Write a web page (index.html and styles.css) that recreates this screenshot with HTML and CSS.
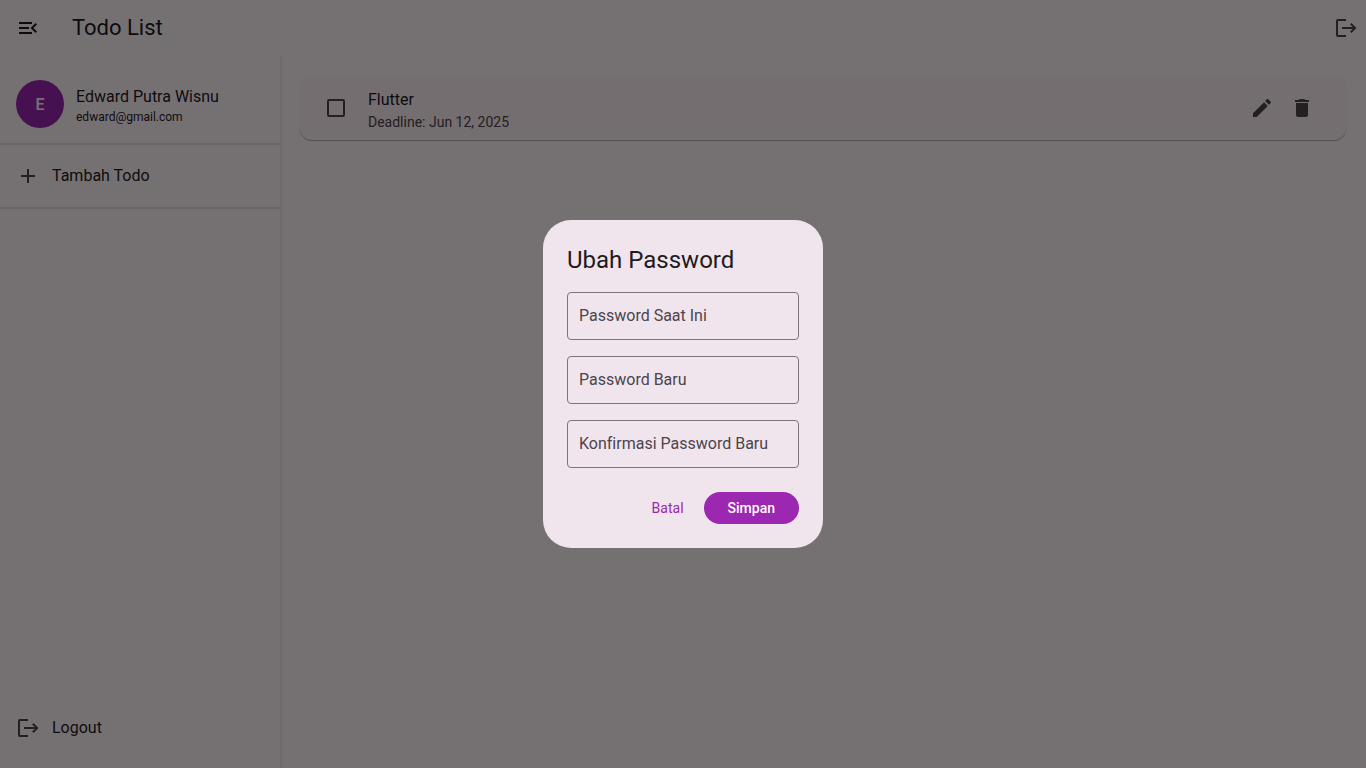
FILE: index.html
```html
<!DOCTYPE html>
<html lang="id">
<head>
<meta charset="utf-8">
<meta name="viewport" content="width=device-width, initial-scale=1">
<title>Todo List</title>
<link rel="stylesheet" href="styles.css">
</head>
<body>
<div class="app">
  <header class="app-bar">
    <button class="icon-button menu-button" type="button" aria-label="Tutup menu">
      <svg class="icon" viewBox="0 0 24 24"><path d="M3 18h13v-2H3v2zM3 13h10v-2H3v2zm0-7v2h13V6H3zm18 9.590L17.420 12 21 8.410 19.590 7l-5 5 5 5L21 15.590z"/></svg>
    </button>
    <h1 class="app-title">Todo List</h1>
    <button class="icon-button" type="button" aria-label="Keluar">
      <svg class="icon" viewBox="0 0 24 24"><path d="M4 3h8v2H4v14h8v2H4c-1.100 0-2-.9-2-2V5c0-1.100.9-2 2-2zM17.500 7l5 5-5 5-1.410-1.410L18.670 13H8v-2h10.670l-2.580-2.590z"/></svg>
    </button>
  </header>
  <div class="body">
    <aside class="sidebar">
      <section class="profile">
        <div class="avatar">E</div>
        <div class="profile-text">
          <p class="profile-name">Edward Putra Wisnu</p>
          <p class="profile-email">edward@gmail.com</p>
        </div>
      </section>
      <button class="nav-item nav-item-divided" type="button">
        <svg class="icon" viewBox="0 0 24 24"><path d="M19 13h-6v6h-2v-6H5v-2h6V5h2v6h6v2z"/></svg>
        Tambah Todo
      </button>
      <button class="nav-item nav-item-last" type="button">
        <svg class="icon" viewBox="0 0 24 24"><path d="M4 3h8v2H4v14h8v2H4c-1.100 0-2-.9-2-2V5c0-1.100.9-2 2-2zM17.500 7l5 5-5 5-1.410-1.410L18.670 13H8v-2h10.670l-2.580-2.590z"/></svg>
        Logout
      </button>
    </aside>
    <main class="content">
      <article class="todo">
        <input class="todo-check" type="checkbox" id="todo-1">
        <div class="todo-text">
          <label class="todo-title" for="todo-1">Flutter</label>
          <p class="todo-deadline">Deadline: Jun 12, 2025</p>
        </div>
        <button class="icon-button" type="button" aria-label="Ubah todo">
          <svg class="icon" viewBox="0 0 24 24"><path d="M3 17.250V21h3.750L17.810 9.940l-3.750-3.750L3 17.250zM20.710 7.040c.39-.39.39-1.020 0-1.410l-2.340-2.340c-.39-.39-1.020-.39-1.410 0l-1.830 1.830 3.750 3.750 1.830-1.830z"/></svg>
        </button>
        <button class="icon-button" type="button" aria-label="Hapus todo">
          <svg class="icon" viewBox="0 0 24 24"><path d="M6 19c0 1.100.9 2 2 2h8c1.100 0 2-.9 2-2V7H6v12zM19 4h-3.500l-1-1h-5l-1 1H5v2h14V4z"/></svg>
        </button>
      </article>
    </main>
  </div>
</div>
<div class="scrim">
  <form class="dialog" role="dialog" aria-modal="true" aria-labelledby="dialog-title">
    <h2 class="dialog-title" id="dialog-title">Ubah Password</h2>
    <div class="fields">
      <div class="field">
        <input class="field-input" type="password" id="current">
        <label class="field-label" for="current">Password Saat Ini</label>
      </div>
      <div class="field">
        <input class="field-input" type="password" id="new">
        <label class="field-label" for="new">Password Baru</label>
      </div>
      <div class="field">
        <input class="field-input" type="password" id="confirm">
        <label class="field-label" for="confirm">Konfirmasi Password Baru</label>
      </div>
    </div>
    <div class="actions">
      <button class="button" type="button">Batal</button>
      <button class="button button-filled" type="submit">Simpan</button>
    </div>
  </form>
</div>
</body>
</html>
```
FILE: styles.css
```css
* { box-sizing: border-box; }
body, h1, h2, p { margin: 0; }
body, button, input {
  font-family: Roboto, "Liberation Sans", sans-serif;
  font-weight: 400;
  font-variant-ligatures: none;
}
body { color: #1f1a1f; background: #fff7fa; }
button { padding: 0; border: 0; background: none; color: inherit; cursor: pointer; }

.app { min-height: 100vh; display: flex; flex-direction: column; }
.app-bar { height: 56px; display: flex; align-items: center; padding: 0 0 0 8px; }
.app-title { flex: 1; padding-left: 24px; font-size: 22px; line-height: 28px; font-weight: 400; }

.icon { width: 24px; height: 24px; fill: currentColor; flex: none; display: block; }
.icon-button { width: 40px; height: 40px; display: grid; place-items: center; color: #4c444d; }
.menu-button { color: #1f1a1f; }

.body { flex: 1; display: flex; }
.sidebar {
  width: 280px;
  display: flex;
  flex-direction: column;
  box-shadow: 1px 0 3px #0000001f;
  clip-path: inset(0 -8px 0 0);
}
.profile {
  display: flex;
  align-items: center;
  gap: 12px;
  padding: 24px 16px 15px;
  border-bottom: 2px solid #e6dce2;
}
.avatar {
  width: 48px;
  height: 48px;
  border-radius: 50%;
  display: grid;
  place-items: center;
  background: #9c27b0;
  color: #fff;
  font-size: 16px;
  font-weight: 500;
}
.profile-text { padding-top: 2px; }
.profile-name { font-size: 16px; line-height: 24px; }
.profile-email { font-size: 12px; line-height: 16px; }
.nav-item {
  height: 64px;
  display: flex;
  align-items: center;
  gap: 12px;
  padding: 0 16px;
  font-size: 16px;
  line-height: 24px;
  text-align: left;
}
.nav-item .icon { color: #4c444d; }
.nav-item-divided { border-bottom: 2px solid #e6dce2; }
.nav-item-last { margin-top: auto; margin-bottom: 8px; }

.content { flex: 1; padding: 20px; }
.todo {
  display: flex;
  align-items: center;
  padding: 8px 24px 8px 27px;
  border-radius: 12px;
  background: #fcf0f5;
  box-shadow: 0 1px 1px #0000004d;
}
.todo-check {
  appearance: none;
  width: 18px;
  height: 18px;
  margin: 0;
  border: 2px solid #4c444d;
  border-radius: 2px;
}
.todo-text { flex: 1; padding: 4px 0 0 23px; }
.todo-title { display: block; font-size: 16px; line-height: 24px; }
.todo-deadline { font-size: 14px; line-height: 20px; color: #4c444d; }

.scrim {
  position: fixed;
  inset: 0;
  display: grid;
  place-items: center;
  background: #0000008a;
}
.dialog { width: 280px; padding: 24px; border-radius: 28px; background: #f0e5ec; }
.dialog-title { font-size: 24px; line-height: 32px; font-weight: 400; }
.fields { display: grid; gap: 16px; padding: 16px 0 24px; }
.field { display: grid; align-items: center; }
.field-input, .field-label { grid-area: 1 / 1; }
.field-input {
  width: 100%;
  height: 48px;
  padding: 0 12px;
  border: 1px solid #7e747d;
  border-radius: 4px;
  background: none;
  font-size: 16px;
}
.field-label { padding-left: 12px; font-size: 16px; line-height: 24px; color: #4c444d; pointer-events: none; }
.field-input:focus + .field-label { opacity: 0; }
.actions { display: flex; justify-content: flex-end; gap: 8px; }
.button {
  height: 32px;
  padding: 0 12px;
  border-radius: 16px;
  font-size: 14px;
  color: #9c27b0;
}
.button-filled { padding: 0 24px; background: #9c27b0; color: #fff; font-weight: 500; }
```
